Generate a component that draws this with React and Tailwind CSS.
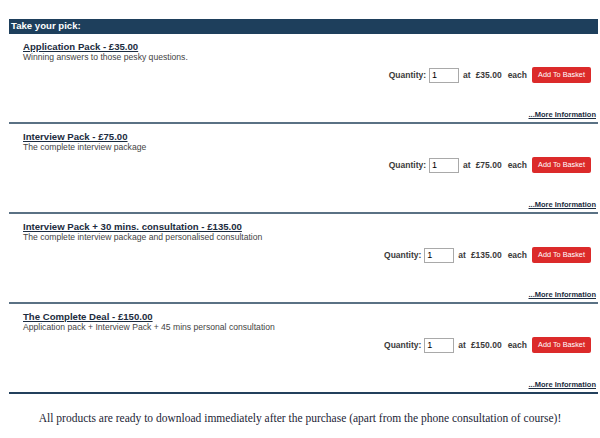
import React from "react";

const products = [
  {
    title: "Application Pack - £35.00",
    desc: "Winning answers to those pesky questions.",
    price: "£35.00",
    line: "bg-[#5a7184]",
  },
  {
    title: "Interview Pack - £75.00",
    desc: "The complete interview package",
    price: "£75.00",
    line: "bg-[#5a7184]",
  },
  {
    title: "Interview Pack + 30 mins. consultation - £135.00",
    desc: "The complete interview package and personalised consultation",
    price: "£135.00",
    line: "bg-[#5a7184]",
  },
  {
    title: "The Complete Deal - £150.00",
    desc: "Application pack + Interview Pack + 45 mins personal consultation",
    price: "£150.00",
    line: "bg-[#23405c]",
  },
];

const Product = ({ title, desc, price, line }) => {
  return (
    <div className="flex flex-col">
      <div className="pl-[14px] pt-[6.5px]">
        <a className="block text-[9.6px] leading-[11px] font-bold text-[#1c2c40] underline underline-offset-[1px] cursor-pointer">
          {title}
        </a>
        <p className="text-[8.6px] leading-[11px] text-[#444]">{desc}</p>
      </div>

      {/* Quantity row */}
      <div className="mt-[4.5px] flex items-center justify-end pr-[7px] h-[16px] text-[8.5px] font-bold text-[#3a3a3a]">
        <span className="mr-[3px]">Quantity:</span>
        <input
          defaultValue="1"
          className="w-[30px] h-[15px] border border-[#a9a9a9] bg-white px-[2px] text-[9px] font-normal text-black outline-none"
        />
        <span className="ml-[4px]">at</span>
        <span className="ml-[5px]">{price}</span>
        <span className="ml-[6px]">each</span>
        <button className="ml-[5px] w-[59px] h-[16px] rounded-[2px] bg-[#dc2a2a] text-[7.3px] font-normal text-white">
          Add To Basket
        </button>
      </div>

      <div className="mt-[27px] flex justify-end pr-[2px]">
        <a className="text-[7.5px] leading-[10px] font-bold text-[#1c2c40] underline cursor-pointer">
          ...More Information
        </a>
      </div>
      <div className={`mt-[2px] h-[2px] ${line}`} />
    </div>
  );
};

export default function App() {
  return (
    <div className="w-[600px] h-[438px] bg-white font-['Liberation_Sans',Arial,sans-serif] pt-[19px] overflow-hidden">
      <div className="ml-[9px] mr-[2px]">
        <div className="h-[15px] bg-[#1e3f5c] pl-[2px] flex items-center">
          <span className="text-[9.6px] font-bold text-white">Take your pick:</span>
        </div>
        {products.map((p) => (
          <Product key={p.title} {...p} />
        ))}
      </div>
      <p className="mt-[16px] text-center font-['Liberation_Serif','Times_New_Roman',serif] text-[11.5px] text-[#1c2535]">
        All products are ready to download immediately after the purchase (apart from the phone consultation of course)!
      </p>
    </div>
  );
}
